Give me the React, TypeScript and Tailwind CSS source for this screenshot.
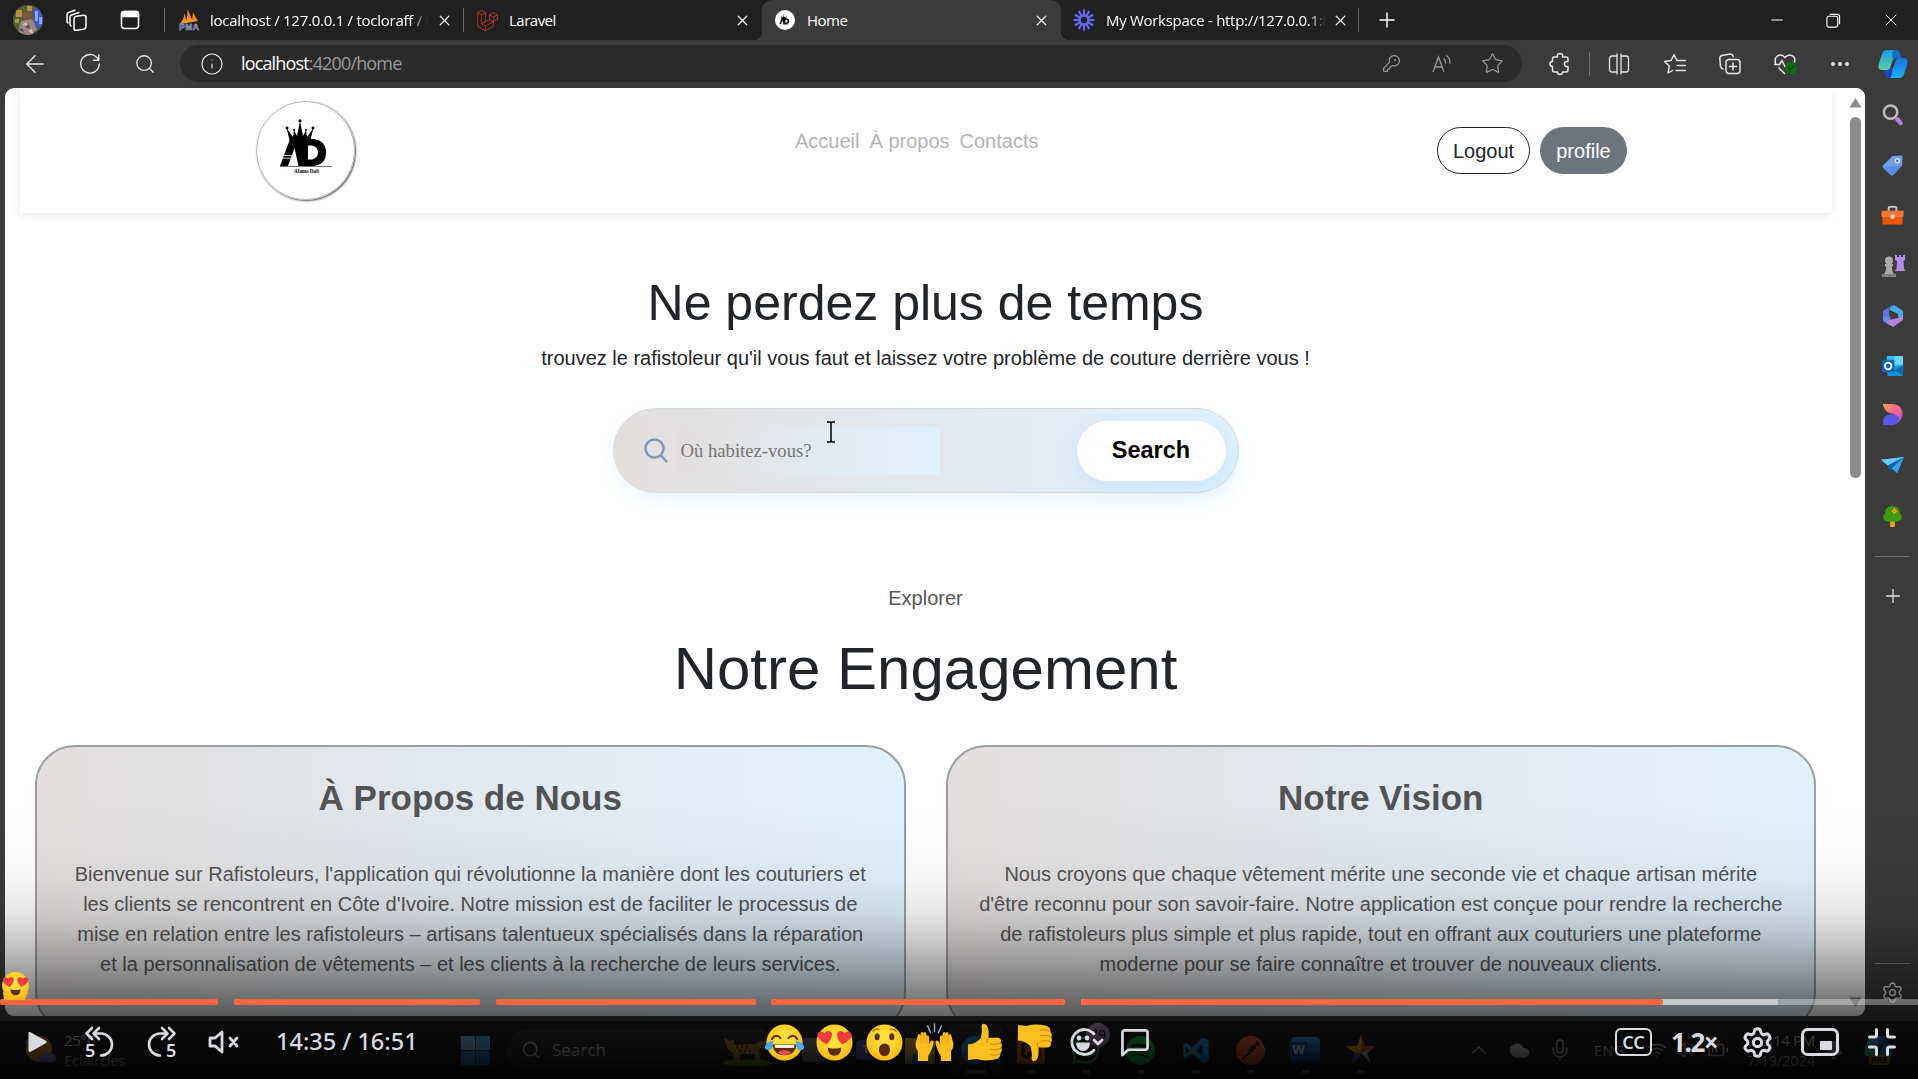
import React from "react";
import { ArrowLeft, Search, Info, KeyRound, Star, Plus, Minus, X, Settings, Ellipsis, ChevronUp, Mic, Wifi, Volume2, BatteryMedium, Cloud, Bell } from "lucide-react";
import { SiLaravel, SiSpotify, SiPostman, SiXampp } from "react-icons/si";
import { FaWhatsapp } from "react-icons/fa";
import { DiVisualstudio } from "react-icons/di";

type SvgProps = { className?: string; children?: React.ReactNode; box?: string };

function Line({ className, children, box = "0 0 24 24" }: SvgProps) {
  return (
    <svg viewBox={box} className={className} fill="none" stroke="currentColor" strokeWidth="1.5" strokeLinecap="round" strokeLinejoin="round">
      {children}
    </svg>
  );
}

/* ---------- brand marks ---------- */

function AlamoMark({ className }: { className?: string }) {
  return (
    <svg viewBox="0 0 52 56" className={className}>
      <g fill="#000">
        <path d="M10 23 6.500 9 13 18 14 11 17 17 20 2 23 17 26 11 27 18 33.500 9 30 23Z" />
        <circle cx="7" cy="9" r="1.500" />
        <circle cx="20" cy="1.700" r="1.500" />
        <circle cx="33" cy="9" r="1.500" />
        <circle cx="14" cy="11" r="1" />
        <circle cx="26" cy="11" r="1" />
        <path d="M10 20H22L25 47H18.500L14.500 29 8 47H0Z" />
        <path fillRule="evenodd" d="M21 20H34Q46 22 46 33.500T34 47H23ZM28 26.500V40.500H32Q38 39 38 33.500T32 26.500Z" />
        <path d="M2 36.500H13M1.500 39.200H12" stroke="#fff" strokeWidth=".8" />
        <path d="M0 47.500H52" stroke="#777" strokeWidth="1" />
      </g>
      <text x="14" y="53.500" fontSize="6" fontWeight="700" fontFamily="Liberation Serif, serif" textLength="25" lengthAdjust="spacingAndGlyphs">Alamo Dab</text>
    </svg>
  );
}

function PmaLogo() {
  return (
    <svg viewBox="0 0 22 22" className="h-[22px] w-[22px]">
      <path d="M2 15Q6 10 6.500 4L9 14ZM8 14Q10 7 9.500 0L15 13ZM14 13 15 3Q17 8 20 12Z" fill="#f6921e" />
      <text x="1" y="21" fontSize="8.500" fontWeight="700" fontFamily="Liberation Sans, sans-serif" fill="#33335c" stroke="#b9bbe0" strokeWidth=".5" textLength="20">PMA</text>
    </svg>
  );
}

function WorkspaceLogo() {
  return (
    <svg viewBox="-12 -12 24 24" className="h-[22px] w-[22px]" stroke="#6366f1" strokeWidth="2.400">
      <circle r="5" fill="none" strokeWidth="3" />
      <path d="M0-5V-11.500M0 5V11.500M-5 0H-11.500M5 0H11.500M2.500-4.300 5.800-10M-2.500-4.300-5.800-10M2.500 4.300 5.800 10M-2.500 4.300-5.800 10M4.300-2.500 10-5.800M-4.300-2.500-10-5.800M4.300 2.500 10 5.800M-4.300 2.500-10 5.800" />
    </svg>
  );
}

function Copilot({ className }: { className?: string }) {
  return (
    <svg viewBox="0 0 30 28" className={className}>
      <defs>
        <linearGradient id="cpA" x1="0" y1="0" x2="0" y2="1"><stop stopColor="#1a9be8" /><stop offset="1" stopColor="#5fcf9c" /></linearGradient>
        <linearGradient id="cpB" x1="0" y1="0" x2="0" y2="1"><stop stopColor="#1b6fe0" /><stop offset="1" stopColor="#18b4f8" /></linearGradient>
      </defs>
      <path d="M9 0H18Q21 0 22 4L23 8H18Q15 8 14 12L12 18Q11 20 9 20H4Q-1 20 1 13L4 4Q5 0 9 0Z" fill="url(#cpA)" />
      <path d="M21 28H12Q9 28 8 24L7 20H12Q15 20 16 16L18 10Q19 8 21 8H26Q31 8 29 15L26 24Q25 28 21 28Z" fill="url(#cpB)" />
      <path d="M18 0Q21 0 22 4L23 8H18Q16 8 15 10L14 5Q14 0 18 0Z" fill="#0f6fc0" />
      <path d="M7 20H12Q14 20 15 18L14 24Q13 28 12 28 9 28 8 24Z" fill="#1745c8" />
    </svg>
  );
}

/* ---------- browser chrome ---------- */

const Divider = ({ className = "" }) => <div className={`h-6 w-px shrink-0 bg-[#6a6a6a] ${className}`} />;
const CloseX = () => <X className="size-[17px] shrink-0 text-[#ececec]" strokeWidth={1.8} />;

function TabBar() {
  return (
    <div className="flex h-10 shrink-0 items-center bg-[#202020] text-[15px] text-white">
      <svg viewBox="0 0 30 30" className="ml-[13px] size-[30px] rounded-full">
        <path fill="#55603a" d="M0 0H30V30H0Z" />
        <path fill="#3d57cf" d="M20 3H30V20L22 23Z" />
        <path fill="#8fa4e8" d="M22 6h3v10h-3zM26 12h3v7h-3z" />
        <path fill="#b3953f" d="M3 5H9V12H3ZM14 1h5v5h-5zM2 14h4v4h-4z" />
        <circle cx="14" cy="10" r="4.500" fill="#7d5640" />
        <path fill="#9a8784" d="M5 27 8 16 19 14 24 24 18 30H7Z" />
        <path fill="#cfc3bd" d="M9 20l4-3 2 4zM15 26l4-2 1 5z" />
        <path fill="#5d4a4d" d="M12 22l4-3 1 5zM6 25l3-2 2 4z" />
      </svg>
      <Line className="ml-[22px] size-6 text-white">
        <rect x="9" y="7.500" width="12" height="14" rx="2.500" transform="skewY(-8) translate(0 2.300)" />
        <path d="M6 18Q5 17.500 5 16V9Q5 7.500 6.500 7L14 4.500M3 15Q2 14.500 2 13V6.500Q2 5 3.500 4.500L10 2.300" />
      </Line>
      <svg viewBox="0 0 20 20" className="ml-[31px] size-5 text-white" fill="none" stroke="currentColor" strokeWidth="1.500">
        <rect x="1.500" y="1.500" width="17" height="17" rx="3" />
        <path d="M1.500 4Q1.500 1.500 4 1.500H16Q18.500 1.500 18.500 4V6.500H1.500Z" fill="currentColor" />
      </svg>
      <Divider className="ml-[24px]" />
      <div className="flex w-[298px] items-center">
        <div className="ml-[13px] w-[22px]"><PmaLogo /></div>
        <div className="ml-[10px] w-[218px] shrink-0 overflow-hidden mask-r-from-92% whitespace-nowrap tracking-[-0.26px]">localhost / 127.0.0.1 / tocloraff / utilisateurs</div>
        <div className="ml-[8px]"><CloseX /></div>
      </div>
      <Divider />
      <div className="flex h-full w-[298px] items-center">
        <SiLaravel className="ml-[13px] size-[21px] text-[#d9361f]" />
        <div className="ml-[11px] w-[210px] tracking-[-0.5px]">Laravel</div>
        <div className="ml-[15px]"><CloseX /></div>
      </div>
      <div className="relative flex h-full w-[299px] items-center rounded-t-[10px] bg-[#3b3b3b]">
        <div className="absolute bottom-0 -left-2 size-2 bg-[radial-gradient(circle_at_0_0,transparent_8px,#3b3b3b_8px)]" />
        <div className="absolute bottom-0 -right-2 size-2 bg-[radial-gradient(circle_at_100%_0,transparent_8px,#3b3b3b_8px)]" />
        <div className="ml-[13px] flex size-5 items-center justify-center rounded-full bg-white"><AlamoMark className="size-3" /></div>
        <div className="ml-[12px] w-[218px] tracking-[-0.5px]">Home</div>
        <div className="ml-[8px]"><CloseX /></div>
      </div>
      <div className="flex w-[297px] items-center">
        <div className="ml-[12px]"><WorkspaceLogo /></div>
        <div className="ml-[11px] w-[220px] shrink-0 overflow-hidden mask-r-from-92% whitespace-nowrap tracking-[-0.3px]">My Workspace - http://127.0.0.1:8000</div>
        <div className="ml-[6px]"><CloseX /></div>
      </div>
      <Divider />
      <Plus className="ml-[16px] size-6 text-white" strokeWidth={1.5} />
      <div className="ml-auto flex items-center text-white">
        <Minus className="mr-[40px] size-[18px]" strokeWidth={1.4} />
        <svg viewBox="0 0 16 16" className="mr-[40px] size-[15px]" fill="none" stroke="currentColor" strokeWidth="1.200">
          <rect x="1" y="3.500" width="11.500" height="11.500" rx="2" />
          <path d="M4 1.500H12Q14.500 1.500 14.500 4V12" />
        </svg>
        <X className="mr-[17px] size-5" strokeWidth={1.2} />
      </div>
    </div>
  );
}

function Toolbar() {
  return (
    <div className="flex h-12 shrink-0 items-center bg-[#3b3b3b] text-[#e6e6e6]">
      <ArrowLeft className="ml-[21px] size-[28px]" strokeWidth={1.2} />
      <Line className="ml-[29px] size-6"><path d="M20.500 8A9.300 9.300 0 1 0 21.300 12M20.800 3V8.200H15.500" strokeWidth="1.400" /></Line>
      <Search className="ml-[32px] size-[22px]" strokeWidth={1.4} />
      <div className="mb-px ml-[24px] flex h-[37px] w-[1342px] items-center rounded-full bg-[#2b2b2b]">
        <Info className="ml-5 size-6" strokeWidth={1.2} />
        <div className="ml-[17px] text-[18px] tracking-[-0.85px] text-[#9a9a9a]"><span className="text-white">localhost</span>:4200/home</div>
        <KeyRound className="ml-auto size-[19px] text-[#9a9a9a]" strokeWidth={1.5} />
        <svg viewBox="0 0 22 22" className="ml-[30px] size-[22px] text-[#9a9a9a]" fill="none" stroke="currentColor" strokeWidth="1.300">
          <path d="M2 19 7.500 4 13 19M4 14H11M12.500 5.500Q15 7 14.500 10.500M15 2.500Q19.500 5 18.800 10.500" />
        </svg>
        <Star className="mr-[18px] ml-[28px] size-[23px] text-[#9a9a9a]" strokeWidth={1.3} />
      </div>
      <Line className="ml-[26px] size-6">
        <path d="M6 5H9.500Q8.500 1.500 12 1.500T14.500 5H18Q20 5 20 7V9.500Q16.500 9 16.500 12T20 14.500V18Q20 20 18 20H14.500Q14.500 22.500 12 22.500T9.500 20H6.500Q4.500 20 4.500 18V14.500Q2 14.500 2 12T4.500 9.500V7Q4.500 5 6 5Z" />
      </Line>
      <div className="ml-[17px] h-6 w-px bg-[#6a6a6a]" />
      <Line className="ml-[17px] size-6"><path d="M10 4H5Q2.500 4 2.500 6.500V17.500Q2.500 20 5 20H10ZM14 4H19Q21.500 4 21.500 6.500V17.500Q21.500 20 19 20H14ZM10 2V22M14 2V22" strokeWidth="1.300" /></Line>
      <Line className="ml-[32px] size-6"><path d="M14 8.500 11 2.500 8 8.500 1.500 9.500 6.300 14 5 21 9.500 18.500M14 8.500H22.500M14 13.500H22.500M13 18.500H22.500" strokeWidth="1.400" /></Line>
      <Line className="ml-[31px] size-6"><rect x="8" y="7.500" width="14" height="14" rx="3" /><path d="M15 11V18M11.500 14.500H18.500M5 17Q3 16.500 2.500 14.500L1.800 6.500Q1.800 4 4 3.500L12 2Q14.500 2 15.300 4.500" /></Line>
      <div className="relative ml-[31px] size-6">
        <Line className="size-6"><path d="M2.500 11Q1 4 7 3 10 3 12 5.500 14 3 17 3 23 4 21.500 10M1.500 12.500H6.500L9 8.500 12.500 15.500 15 12H17.500M6 16 11.500 21.500" /></Line>
        <div className="absolute top-[10px] left-[12px] flex size-3 items-center justify-center rounded-full bg-[#0f6a14]"><Line className="size-2 text-[#033b05]"><path d="M4 12 10 18 20 6" strokeWidth="3" /></Line></div>
      </div>
      <Ellipsis className="ml-[31px] size-[24px]" strokeWidth={2} />
      <Copilot className="ml-[26px] h-[28px] w-[30px]" />
    </div>
  );
}

/* ---------- edge sidebar ---------- */

function EdgeSidebar() {
  return (
    <div className="flex w-[53px] shrink-0 flex-col items-center bg-[#3b3b3b] pt-[15px] pl-[2px]">
      <svg viewBox="0 0 24 24" className="size-[23px]" fill="none" strokeLinecap="round"><circle cx="10" cy="9.500" r="7" stroke="#bdbdbd" strokeWidth="2.600" /><path d="M17 17 20.500 21" stroke="#b583dd" strokeWidth="4.500" /></svg>
      <svg viewBox="0 0 24 24" className="mt-[28px] size-[23px]"><path d="M12 2 21 1.500Q22.500 1.500 22.500 3L22 12 13 22Q11.500 23 10 22L2 14.500Q1 13 2 12Z" fill="#6ea0ea" /><path d="M2 14 22 11 13 22Q11.500 23 10 22Z" fill="#4f83d8" opacity=".6" /><circle cx="17" cy="7" r="2.800" fill="#dbe9ff" /><circle cx="17" cy="7" r="1.300" fill="#3f5fa5" /></svg>
      <svg viewBox="0 0 24 24" className="mt-[27px] size-[23px]"><path d="M8 7V4Q8 3 9 3H15Q16 3 16 4V7" fill="none" stroke="#c9c9c9" strokeWidth="2" /><rect x="1.500" y="12" width="21" height="9.500" rx="1" fill="#e8590c" /><rect x=".5" y="7" width="23" height="6.500" rx="1" fill="#fd7632" /><circle cx="12" cy="13.300" r="2.300" fill="#d6cfc8" /></svg>
      <svg viewBox="0 0 24 24" className="mt-[27px] size-[24px]"><path d="M14 1H16V3H18V1H20V3H22V1H24V6L22.500 7 23 15 24.500 17H13.500L15.500 15 16 7 14 6Z" fill="#b98ae6" /><g fill="#a9a9a9"><circle cx="8" cy="6.500" r="4" /><path d="M4 10H12V12L10.500 13 12 19 15 21V23H1V21L4 19 5.500 13 4 12Z" /></g><path d="M1 20H15V23H1Z" fill="#7e7e7e" /></svg>
      <svg viewBox="0 0 24 24" className="mt-[26px] size-[24px]"><path d="M12 1 2 7V17L9 21 9.500 14 8 12V6Z" fill="#7584e0" /><path d="M9 4 13 1 22 7V16L17 13V10L9 6Z" fill="#43aeea" /><path d="M22 16 12 23 5 19 10 15.500 17 14 22 11Z" fill="#b184e2" /><path d="M9 14 8 7 12 1 2 7V12Z" fill="#496dd0" opacity=".6" /></svg>
      <svg viewBox="0 0 24 24" className="mt-[27px] size-[23px]"><rect x="6" y="1" width="17" height="17" rx="1" fill="#35bff1" /><path d="M14 1H22Q23 1 23 2V10H14Z" fill="#67d7fb" /><path d="M6 12 23 11V21Q23 22 22 22H7Z" fill="#1690d6" /><path d="M14 16 23 11V21Z" fill="#0a6bb8" /><rect x="1" y="5" width="13" height="13" rx="1.500" fill="#0868c0" /><circle cx="7.500" cy="11.500" r="3.400" fill="none" stroke="#fff" strokeWidth="2" /></svg>
      <svg viewBox="0 0 24 24" className="mt-[25px] size-[23px]"><defs><linearGradient id="dsA" x1="0" y1="0" x2="1" y2="1"><stop stopColor="#ff9b52" /><stop offset=".55" stopColor="#f0609c" /><stop offset="1" stopColor="#b545e8" /></linearGradient></defs><path d="M2 1H12Q23 2 22.500 13 20 21 14 22 20 14 12 11 4 11 2 1Z" fill="url(#dsA)" /><path d="M2 23V19Q3 12 11 11.500 19 12.500 19 17 18 22 13 23Z" fill="#5a5ae8" /></svg>
      <svg viewBox="0 0 24 24" className="mt-[28px] size-[23px]"><path d="M0 6 24 3 17 20 11 15Z" fill="#2ba3e8" /><path d="M0 6 24 3 7 12Z" fill="#67c7f7" /><path d="M7 12 24 3 11 15 9 19Z" fill="#0c62a8" /></svg>
      <svg viewBox="0 0 24 24" className="mt-[28px] size-[23px]"><path d="M9.500 15H14.500V23H9.500Z" fill="#e7a515" /><path d="M12 1Q20 2 20 9 23 12 20.500 16 17 18 12 17.500 6 18 3.500 16 1 12 4 9 4 2 12 1Z" fill="#3f9b12" /><path d="M14 3.500 17 6.500 14 9.500 11 6.500Z" fill="#ffb900" /><circle cx="14" cy="6.500" r="1.200" fill="#d87509" /></svg>
      <div className="mt-[28px] h-px w-[35px] bg-[#6a6a6a]" />
      <Plus className="mt-[28px] size-[22px] text-[#e0e0e0]" strokeWidth={1.4} />
      <div className="mt-auto h-px w-[35px] bg-[#7a7a7a]" />
      <Settings className="mt-[17px] mb-[12px] size-[23px] text-[#f4f4f4]" strokeWidth={1.5} />
    </div>
  );
}

/* ---------- web page ---------- */

function Navbar() {
  return (
    <nav className="ml-[15px] flex h-[125px] w-[1812px] shrink-0 bg-white shadow-[0_2px_10px_rgba(0,0,0,0.09)]">
      <div className="mt-[13px] ml-[236px] flex size-[99px] items-center justify-center rounded-full border border-[#b4b4b4] shadow-[1px_1px_2px_rgba(0,0,0,0.65)]">
        <AlamoMark className="-mt-[7px] h-[56px] w-[52px]" />
      </div>
      <div className="mt-[38px] ml-[440px] flex w-[250px] gap-[10px] text-[20px] leading-[30px] text-[#b3b3b3]">
        <span>Accueil</span><span>À propos</span><span>Contacts</span>
      </div>
      <div className="mt-[39px] ml-[392px] flex h-[47px] gap-[10px] text-[20px]">
        <button className="w-[93px] rounded-full border border-[#212529] text-[#212529]">Logout</button>
        <button className="w-[87px] rounded-full bg-[#6c757d] text-white">profile</button>
      </div>
    </nav>
  );
}

function SearchBox() {
  return (
    <div className="mt-[35px] flex h-[85px] w-[626px] shrink-0 items-center rounded-full border border-[#d8dadd] bg-linear-to-r from-[#e3dfde] to-[#e0f2ff] shadow-[0_8px_20px_rgba(150,210,245,0.18)]">
      <svg viewBox="0 0 24 25" className="ml-[30px] h-[25px] w-6" fill="none" stroke="#8396bb" strokeWidth="2.400"><circle cx="10.500" cy="10.500" r="9" /><path d="M17 17.500 23 24" /></svg>
      <div className="ml-[9px] flex h-[48px] w-[263px] items-center bg-linear-to-r from-[#e3dfde] to-[#e0f2ff] pl-[4px] font-['Liberation_Serif',serif] text-[18.670px] text-[#757575]">Où habitez-vous?</div>
      <button className="mr-[12px] ml-auto h-[60px] w-[149px] rounded-full bg-white text-[23.500px] font-bold text-black shadow-[0_8px_20px_rgba(160,205,255,0.35)]">Search</button>
    </div>
  );
}

function Card({ title, lines }: { title: string; lines: string[] }) {
  return (
    <article className="h-[287px] flex-1 rounded-[40px] border-2 border-[#9c9fa1] bg-linear-to-r from-[#e3dfde] to-[#e0f2ff] pt-[30px] text-center text-[#525354]">
      <h3 className="text-[35px] leading-[42px] font-bold">{title}</h3>
      <div className="mt-[40px] text-[20px] leading-[30px]">
        {lines.map((l) => <p key={l} className="whitespace-nowrap">{l}</p>)}
      </div>
    </article>
  );
}

function WebPage() {
  return (
    <main className="relative flex w-[1860px] flex-col overflow-hidden rounded-[9px] bg-white font-['Liberation_Sans',Arial,sans-serif] text-[#212529]">
      <Navbar />
      <section className="flex w-[1841px] flex-col items-center">
        <h1 className="mt-[60px] text-[50px] leading-[60px]">Ne perdez plus de temps</h1>
        <p className="mt-[10px] text-[20px] leading-[30px]">trouvez le rafistoleur qu'il vous faut et laissez votre problème de couture derrière vous !</p>
        <SearchBox />
        <p className="mt-[90px] text-[20px] leading-[30px] text-[#555]">Explorer</p>
        <h2 className="mt-[20px] text-[60px] leading-[72px]">Notre Engagement</h2>
      </section>
      <section className="mt-[40px] ml-[30px] flex w-[1781px] gap-[40px]">
        <Card title="À Propos de Nous" lines={[
          "Bienvenue sur Rafistoleurs, l'application qui révolutionne la manière dont les couturiers et",
          "les clients se rencontrent en Côte d'Ivoire. Notre mission est de faciliter le processus de",
          "mise en relation entre les rafistoleurs – artisans talentueux spécialisés dans la réparation",
          "et la personnalisation de vêtements – et les clients à la recherche de leurs services.",
        ]} />
        <Card title="Notre Vision" lines={[
          "Nous croyons que chaque vêtement mérite une seconde vie et chaque artisan mérite",
          "d'être reconnu pour son savoir-faire. Notre application est conçue pour rendre la recherche",
          "de rafistoleurs plus simple et plus rapide, tout en offrant aux couturiers une plateforme",
          "moderne pour se faire connaître et trouver de nouveaux clients.",
        ]} />
      </section>
      {/* scrollbar */}
      <div className="absolute inset-y-0 right-0 flex w-[19px] flex-col items-center bg-white">
        <svg viewBox="0 0 13 11" className="mt-[9px] h-[11px] w-[13px]"><path d="M6.500 1 12.500 10.500H.5Z" fill="#8b8b8b" /></svg>
        <div className="mt-[9px] h-[361px] w-[11px] rounded-full bg-[#8b8b8b]" />
        <svg viewBox="0 0 13 11" className="mt-auto mb-[8px] h-[11px] w-[13px]"><path d="M6.500 10 12.500.5H.5Z" fill="#8b8b8b" /></svg>
      </div>
      {/* text cursor */}
      <svg viewBox="0 0 10 22" className="absolute top-[333px] left-[821px] h-[22px] w-[10px]" fill="none" stroke="#000" strokeWidth="1.500"><path d="M1 1H4L5 2 6 1H9M5 2V20M1 21H4L5 20 6 21H9" /></svg>
    </main>
  );
}

/* ---------- windows taskbar ---------- */

function Running({ children, active = false }: { children: React.ReactNode; active?: boolean }) {
  return (
    <div className={`flex h-[52px] w-[55px] shrink-0 flex-col items-center pt-[11px] ${active ? "rounded-lg bg-[#303030]" : ""}`}>
      <div className="flex h-[30px] items-center">{children}</div>
      <div className={`mt-[5px] h-1 shrink-0 rounded-full ${active ? "w-5 bg-[#d9aaea]" : "w-2 bg-[#bababa]"}`} />
    </div>
  );
}

function Taskbar() {
  return (
    <div className="mt-[4px] flex h-[59px] shrink-0 items-center border-t border-[#3a3a3a] bg-[#202020] text-[15px] text-[#d8d8d8]">
      <svg viewBox="0 0 32 32" className="ml-[25px] size-[32px]"><circle cx="14" cy="15" r="13" fill="#f2a230" /><path d="M2 12Q-2 8 3 5 9 3 10 9Z" fill="#7f98c8" /><path d="M14 28Q11 21 18 20 22 15 26 20 31 20 31 25 30 28 27 28Z" fill="#8ea3d8" /></svg>
      <div className="ml-[7px] w-[70px] leading-5 tracking-[-0.3px]"><div>25°C</div><div>Eclaircies</div></div>
      <div className="ml-[327px] grid size-[29px] shrink-0 grid-cols-2 gap-px"><i className="bg-[#79d4fa]" /><i className="bg-[#4cc2f5]" /><i className="bg-[#34aaf0]" /><i className="bg-[#1490df]" /></div>
      <div className="ml-[17px] flex h-10 w-[271px] shrink-0 items-center rounded-full border border-[#444] bg-[#303030]">
        <Search className="ml-[13px] size-[20px]" strokeWidth={1.7} />
        <span className="ml-[11px] text-[17px]">Search</span>
        <svg viewBox="0 0 52 32" className="mr-[4px] ml-auto h-8 w-[52px]"><ellipse cx="26" cy="29" rx="25" ry="3.500" fill="#7ab518" /><path d="M3 4 9 7 13 5 13 11 34 10 40 7Q46 9 51 2 49 11 40 12L38 17 40 28H36L33 20H20L17 29H13L12 19 6 14Z" fill="#c98f3a" /><path d="M15 13h14M18 17h12" stroke="#6f3f1a" strokeWidth="3" strokeDasharray="2 3" /></svg>
      </div>
      <div className="ml-[24px] size-[24px] shrink-0 rounded-sm bg-[#8d8d8d]" />
      <div className="ml-[30px] flex size-[20px] shrink-0 items-center justify-center rounded-sm bg-[#6067c8] text-[13px] font-bold text-white">T</div>
      <svg viewBox="0 0 30 28" className="ml-[29px] h-[28px] w-[30px]"><path d="M0 2H11L14 5H30V28H0Z" fill="#f5c542" /><path d="M7 18H23V28H7Z" fill="#2a7fd0" /></svg>
      <div className="ml-[13px] flex h-[52px]">
        <Running active><div className="size-[29px] rounded-full bg-linear-to-br from-[#2bb6e6] to-[#0b5fb5]" /></Running>
        <Running><SiXampp className="size-[28px] text-[#fb7a24]" /></Running>
        <Running>
          <div className="relative"><FaWhatsapp className="size-[31px] text-[#25d366]" /><div className="absolute -top-3 left-[16px] flex size-6 items-center justify-center rounded-full bg-[#b58fc4] text-[14px] text-black">79</div></div>
        </Running>
        <Running><SiSpotify className="size-[29px] text-[#1ed760]" /></Running>
        <Running><DiVisualstudio className="size-[36px] text-[#2aa2ee]" /></Running>
        <Running><SiPostman className="size-[29px] text-[#ff6c37]" /></Running>
        <Running><div className="flex h-[27px] w-[29px] items-center rounded-sm bg-linear-to-b from-[#41a5ee] to-[#103f91]"><div className="-ml-px flex size-[17px] items-center justify-center bg-[#185abd] text-[13px] font-bold text-white">W</div></div></Running>
        <Running><svg viewBox="0 0 30 30" className="size-[30px]"><path d="M15 0 15 22 5 29 9 18 0 11H11Z" fill="#f2b52c" /><path d="M15 0 19 11H30L15 18Z" fill="#e05548" /><path d="M30 11 21 18 25 29 15 18Z" fill="#c8c8c8" /><path d="M15 18 15 22 5 29 9 18Z" fill="#7f4fc0" /></svg></Running>
      </div>
      <ChevronUp className="ml-[79px] size-6" strokeWidth={1.6} />
      <Cloud className="ml-[18px] size-[21px]" fill="currentColor" />
      <Mic className="ml-[18px] size-6" strokeWidth={1.4} />
      <span className="ml-[22px] text-[15px]">ENG</span>
      <Wifi className="ml-[22px] size-5" strokeWidth={1.7} />
      <Volume2 className="ml-[9px] size-5" strokeWidth={1.7} />
      <BatteryMedium className="ml-[11px] size-[22px]" strokeWidth={1.7} />
      <div className="ml-auto text-right leading-[20px] tracking-[-0.3px]"><div>3:14 PM</div><div>7/19/2024</div></div>
      <Bell className="ml-[9px] size-[20px] text-[#b58fc4]" fill="currentColor" />
      <div className="relative mr-[24px] ml-[20px]">
        <Copilot className="h-[28px] w-[30px]" />
        <div className="absolute top-[19px] left-[5px] rounded-sm bg-[#d3a912] px-[2px] text-[9px] leading-[10px] font-bold text-black">PRE</div>
      </div>
    </div>
  );
}

/* ---------- player overlay ---------- */

function FaceBase() {
  return (
    <>
      <defs><radialGradient id="face" cx=".5" cy=".4" r=".6"><stop offset=".3" stopColor="#ffe03a" /><stop offset="1" stopColor="#fbb814" /></radialGradient></defs>
      <circle cx="20" cy="20" r="18.500" fill="url(#face)" />
    </>
  );
}

function Joy() {
  return (
    <svg viewBox="0 0 40 40" className="size-[39px]">
      <FaceBase />
      <path d="M7.500 22H32.500Q31 33 20 33T7.500 22Z" fill="#5a2a12" /><path d="M10 22.500H30V25.500H10Z" fill="#fff" /><path d="M13 30Q20 26 27 30 24 33 20 33T13 30Z" fill="#ef4b5a" />
      <path d="M7 16.500Q11 10 16 15.500M24 15.500Q29 10 33 16.500" fill="none" stroke="#5a2a12" strokeWidth="2" strokeLinecap="round" />
      <path d="M8 18Q9 27 4 28-1 28 0 23.500 2 20 8 18ZM32 18Q31 27 36 28 41 28 40 23.500 38 20 32 18Z" fill="#45abed" />
    </svg>
  );
}

function HeartEyes({ className = "size-[39px]" }) {
  return (
    <svg viewBox="0 0 40 40" className={className}>
      <FaceBase />
      <path d="M12 22Q2 17 2.500 11.500 4.500 7 10 10.500 14 6 17.500 10.500 18 16 12 22ZM28 22Q22 16 22.500 10.500 26 6 30 10.500 35.500 7 37.500 11.500 38 17 28 22Z" fill="#f03a3f" />
      <path d="M13 25Q20 27.500 27 25 26.500 33.500 20 33.500T13 25Z" fill="#5a2a12" />
    </svg>
  );
}

function Wow() {
  return (
    <svg viewBox="0 0 40 40" className="size-[39px]">
      <FaceBase />
      <ellipse cx="12.500" cy="14" rx="2.600" ry="3.600" fill="#5a2a12" /><ellipse cx="27.500" cy="14" rx="2.600" ry="3.600" fill="#5a2a12" /><ellipse cx="20" cy="27.500" rx="5.800" ry="6.500" fill="#5a2a12" />
      <path d="M8 8.500Q10.500 5.500 14 6.500M32 8.500Q29.500 5.500 26 6.500" fill="none" stroke="#a2661c" strokeWidth="1.200" strokeLinecap="round" />
    </svg>
  );
}

function RaisedHands() {
  const hand = "M3 39V29Q-1 23 1.500 18L3 12Q4.500 10 5.500 13L6 10Q8 8 8.800 11V10Q11 8 11.500 11L12 13Q14.500 12 14.500 15V22Q16 17 18.500 18 20 19 17.500 26 15 32 13.500 34V39Z";
  return (
    <svg viewBox="0 0 40 40" className="size-[39px]">
      <g fill="#fbbf1f"><path d={hand} /><path d={hand} transform="translate(40 0) scale(-1 1)" /></g>
      <path d="M6 12V21M9 11V21M12 13V21M34 12V21M31 11V21M28 13V21" stroke="#e59600" strokeWidth=".8" />
      <path d="M20 1V9M13 3 16 10M27 3 24 10" stroke="#9ec7e0" strokeWidth="1.300" strokeLinecap="round" />
    </svg>
  );
}

function Thumb({ className = "" }) {
  return (
    <svg viewBox="0 0 40 40" className={`size-[39px] ${className}`}>
      <path d="M16 16Q18 9 17 3 18-1 22 2 25 6 24 15H34Q38 16 36.500 20 39 22 37 25.500 39 28 36 31 37 35 33 37 20 40 12 37L3 38V22Q10 22 16 16Z" fill="#fbbf1f" />
      <path d="M36.500 20.500Q33 22.500 26 21.500M37 26Q33 28 26 27M36 31.500Q32 33.500 26 32.500M24 15Q22 17 23 20" fill="none" stroke="#e08f00" strokeWidth="1.300" strokeLinecap="round" />
    </svg>
  );
}

function SkipFive({ forward = false }) {
  return (
    <svg viewBox="0 0 30 32" className="h-8 w-[30px]" fill="none" stroke="currentColor" strokeWidth="2.600" strokeLinecap="round" strokeLinejoin="round">
      <g transform={forward ? "translate(30 0) scale(-1 1)" : undefined}>
        <path d="M8 2 2.500 7.500 8 13M15 2 9.500 7.500 15 13M10 7.500H17A11 11 0 0 1 17 29.500" />
      </g>
      <text x={forward ? 19 : 1} y="30.500" fontSize="18" fontWeight="600" fontFamily="Noto Sans, sans-serif" fill="currentColor" stroke="none">5</text>
    </svg>
  );
}

function Player() {
  return (
    <div className="absolute inset-x-0 bottom-0 flex h-[279px] flex-col justify-end bg-[linear-gradient(to_bottom,transparent_0px,rgba(0,0,0,0.01)_30px,rgba(0,0,0,0.04)_80px,rgba(0,0,0,0.1)_113px,rgba(0,0,0,0.18)_133px,rgba(0,0,0,0.31)_160px,rgba(0,0,0,0.42)_180px,rgba(0,0,0,0.52)_199px,rgba(0,0,0,0.59)_213px,rgba(0,0,0,0.72)_233px,rgba(0,0,0,0.8)_252px,rgba(0,0,0,0.96)_279px)] text-[#d9dae0]">
      <div className="relative h-[27px] w-[29px]">
        <svg viewBox="0 0 29 8" className="absolute -bottom-px left-px h-2 w-[29px]"><path d="M2 0H27L24 8H3Z" fill="#f5b51b" /></svg>
        <HeartEyes className="absolute -top-px left-px size-[29px]" />
      </div>
      <div className="flex h-[6px] gap-4">
        <div className="w-[218px] rounded-[2px] bg-[#ff6640]" />
        <div className="w-[246px] rounded-[2px] bg-[#ff6640]" />
        <div className="w-[260px] rounded-[2px] bg-[#ff6640]" />
        <div className="-ml-px w-[294px] rounded-[2px] bg-[#ff6640]" />
        <div className="flex-1 rounded-l-[2px] bg-white/35">
          <div className="h-full w-[697px] rounded-[2px] bg-[#cbcccd]"><div className="h-full w-[582px] rounded-[2px] bg-[#ff6640]" /></div>
        </div>
      </div>
      <div className="flex h-[74px] items-center">
        <svg viewBox="0 0 20 22" className="ml-[28px] h-[22px] w-[19px]"><path d="M2 2 18 11 2 20Z" fill="currentColor" stroke="currentColor" strokeWidth="3" strokeLinejoin="round" /></svg>
        <div className="ml-[37px]"><SkipFive /></div>
        <div className="ml-[33px]"><SkipFive forward /></div>
        <svg viewBox="0 0 32 24" className="ml-[31px] h-6 w-8" fill="none" stroke="currentColor" strokeWidth="2.800" strokeLinejoin="round" strokeLinecap="round"><path d="M2 8V16H7L14 22V2L7 8ZM22 8 29 16M29 8 22 16" /></svg>
        <div className="ml-[36px] w-[170px] font-['Noto_Sans',sans-serif] text-[23.500px] font-medium whitespace-nowrap">14:35 / 16:51</div>
        <div className="ml-[319px] flex items-center gap-[11px]">
          <Joy /><HeartEyes /><Wow /><RaisedHands /><Thumb /><Thumb className="-scale-y-100" />
        </div>
        <svg viewBox="0 0 36 30" className="ml-[14px] h-[30px] w-9" fill="none" stroke="currentColor" strokeWidth="2.800" strokeLinecap="round" strokeLinejoin="round">
          <path d="M26 7A12.500 12.500 0 1 0 26 23M26 13 30 17 34 13" /><circle cx="11" cy="11" r="1" fill="currentColor" /><circle cx="19" cy="11" r="1" fill="currentColor" /><path d="M9.500 17H20.500Q19.500 22.500 15 22.500T9.500 17Z" fill="currentColor" />
        </svg>
        <svg viewBox="0 0 30 30" className="ml-[16px] h-[29px] w-[30px]" fill="none" stroke="currentColor" strokeWidth="2.800" strokeLinejoin="round"><path d="M2 28V5Q2 2.500 4.500 2.500H25.500Q28 2.500 28 5V20Q28 22.500 25.500 22.500H8Z" /></svg>
        <div className="ml-auto flex h-[28px] w-[37px] items-center justify-center rounded-[6px] border-[2.500px] border-current font-['Noto_Sans',sans-serif] text-[18px] font-semibold">CC</div>
        <div className="ml-[19px] w-[50px] font-['Noto_Sans',sans-serif] text-[26px] leading-[30px] font-bold tracking-[-1.400px]">1.2×</div>
        <Settings className="ml-[20px] size-[33px]" strokeWidth={2.2} />
        <svg viewBox="0 0 38 28" className="ml-[27px] h-[28px] w-[38px]" fill="none" stroke="currentColor" strokeWidth="3"><rect x="1.500" y="1.500" width="35" height="25" rx="5" /><rect x="20" y="14" width="10" height="7" fill="currentColor" strokeWidth="2" strokeLinejoin="round" /></svg>
        <svg viewBox="0 0 28 28" className="mr-[22px] ml-[29px] size-[28px]" fill="none" stroke="currentColor" strokeWidth="3" strokeLinecap="round" strokeLinejoin="round"><path d="M8.500 1.500V7Q8.500 9 6.500 9H1.500M19.500 1.500V7Q19.500 9 21.500 9H26.500M8.500 26.500V21Q8.500 19 6.500 19H1.500M19.500 26.500V21Q19.500 19 21.500 19H26.500" /></svg>
      </div>
    </div>
  );
}

export default function App() {
  return (
    <div className="relative flex h-[1079px] w-[1918px] flex-col overflow-hidden bg-[#3b3b3b] font-['Open_Sans','Noto_Sans',sans-serif]">
      <TabBar />
      <Toolbar />
      <div className="flex h-[928px] shrink-0 pl-[5px]">
        <WebPage />
        <EdgeSidebar />
      </div>
      <Taskbar />
      <Player />
    </div>
  );
}
